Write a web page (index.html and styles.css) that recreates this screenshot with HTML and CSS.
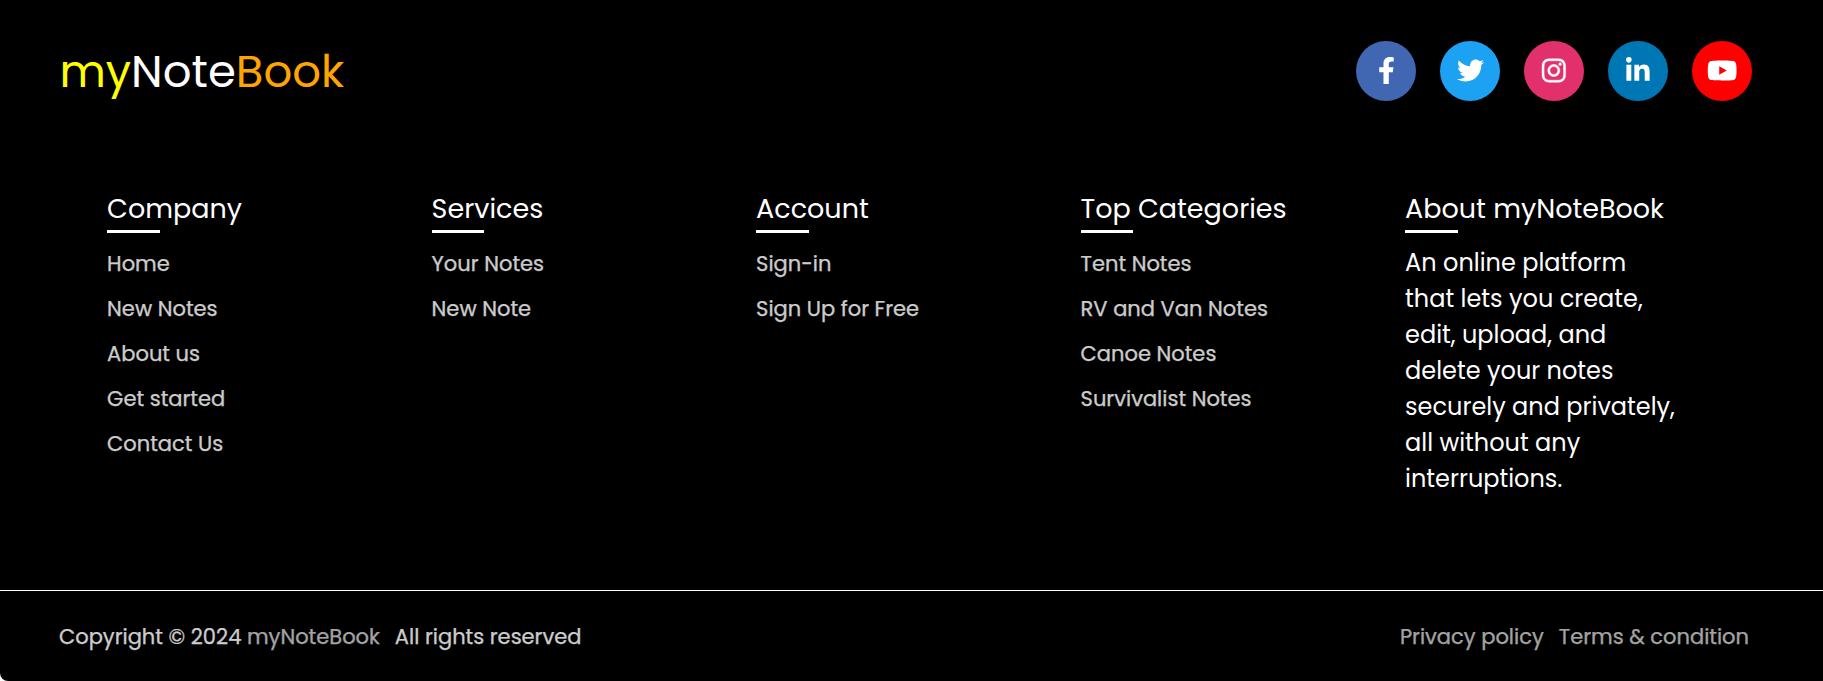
FILE: index.html
```html
<!DOCTYPE html>
<html lang="en">
<head>
<meta charset="utf-8">
<title>myNoteBook</title>
<link rel="stylesheet" href="styles.css">
</head>
<body>
<footer class="footer">
  <div class="top">
    <div class="logo"><span class="logo-my">my</span>Note<span class="logo-book">Book</span></div>
    <div class="social">
      <a class="circle facebook"><svg viewBox="0 0 320 512"><path d="M279.14 288l14.22-92.66h-88.91v-60.13c0-25.35 12.42-50.06 52.24-50.06h40.42V6.26S260.43 0 225.36 0c-73.22 0-121.08 44.38-121.08 124.72v70.62H22.89V288h81.39v224h100.17V288z"/></svg></a>
      <a class="circle twitter"><svg viewBox="0 0 512 512"><path d="M459.37 151.716c.325 4.548.325 9.097.325 13.645 0 138.72-105.583 298.558-298.558 298.558-59.452 0-114.68-17.219-161.137-47.106 8.447.974 16.568 1.299 25.34 1.299 49.055 0 94.213-16.568 130.274-44.832-46.132-.975-84.792-31.188-98.112-72.772 6.498.974 12.995 1.624 19.818 1.624 9.421 0 18.843-1.3 27.614-3.573-48.081-9.747-84.143-51.98-84.143-102.985v-1.299c13.969 7.797 30.214 12.67 47.431 13.319-28.264-18.843-46.781-51.005-46.781-87.391 0-19.492 5.197-37.36 14.294-52.954 51.655 63.675 129.3 105.258 216.365 109.807-1.624-7.797-2.599-15.918-2.599-24.04 0-57.828 46.782-104.934 104.934-104.934 30.213 0 57.502 12.67 76.67 33.137 23.715-4.548 46.456-13.32 66.599-25.34-7.798 24.366-24.366 44.833-46.132 57.827 21.117-2.273 41.584-8.122 60.426-16.243-14.292 20.791-32.161 39.308-52.628 54.253z"/></svg></a>
      <a class="circle instagram"><svg viewBox="0 0 448 512"><path d="M224.1 141c-63.6 0-114.9 51.3-114.9 114.9s51.3 114.9 114.9 114.9S339 319.5 339 255.9 287.7 141 224.1 141zm0 189.6c-41.1 0-74.7-33.5-74.7-74.7s33.5-74.7 74.7-74.7 74.7 33.5 74.7 74.7-33.6 74.7-74.7 74.7zm146.4-194.3c0 14.9-12 26.8-26.8 26.8-14.9 0-26.8-12-26.8-26.8s12-26.8 26.8-26.8 26.8 12 26.8 26.8zm76.1 27.2c-1.7-35.9-9.9-67.7-36.2-93.9-26.2-26.2-58-34.4-93.9-36.2-37-2.1-147.9-2.1-184.9 0-35.8 1.7-67.6 9.9-93.9 36.1s-34.4 58-36.2 93.9c-2.1 37-2.1 147.9 0 184.9 1.7 35.9 9.9 67.7 36.2 93.9s58 34.4 93.9 36.2c37 2.1 147.9 2.1 184.9 0 35.9-1.7 67.7-9.9 93.9-36.2 26.2-26.2 34.4-58 36.2-93.9 2.1-37 2.1-147.8 0-184.8zM398.8 388c-7.8 19.6-22.9 34.7-42.6 42.6-29.5 11.7-99.5 9-132.1 9s-102.7 2.6-132.1-9c-19.6-7.8-34.7-22.9-42.6-42.6-11.7-29.5-9-99.5-9-132.1s-2.6-102.7 9-132.1c7.8-19.6 22.9-34.7 42.6-42.6 29.5-11.7 99.5-9 132.1-9s102.7-2.6 132.1 9c19.6 7.8 34.7 22.9 42.6 42.6 11.7 29.5 9 99.5 9 132.1s2.7 102.7-9 132.1z"/></svg></a>
      <a class="circle linkedin"><svg viewBox="0 0 448 512"><path d="M100.28 448H7.4V148.9h92.88zM53.79 108.1C24.09 108.1 0 83.5 0 53.8a53.79 53.79 0 0 1 107.58 0c0 29.7-24.1 54.3-53.79 54.3zM447.9 448h-92.68V302.4c0-34.7-.7-79.2-48.29-79.2-48.29 0-55.69 37.7-55.69 76.7V448h-92.78V148.9h89.08v40.8h1.3c12.4-23.5 42.69-48.3 87.88-48.3 94 0 111.28 61.9 111.28 142.3V448z"/></svg></a>
      <a class="circle youtube"><svg viewBox="0 0 576 512"><path d="M549.655 124.083c-6.281-23.65-24.787-42.276-48.284-48.597C458.781 64 288 64 288 64S117.22 64 74.629 75.486c-23.497 6.322-42.003 24.947-48.284 48.597-11.412 42.867-11.412 132.305-11.412 132.305s0 89.438 11.412 132.305c6.281 23.65 24.787 41.5 48.284 47.821C117.22 448 288 448 288 448s170.78 0 213.371-11.486c23.497-6.321 42.003-24.171 48.284-47.821 11.412-42.867 11.412-132.305 11.412-132.305s0-89.438-11.412-132.305zm-317.51 213.508V175.185l142.739 81.205-142.739 81.201z"/></svg></a>
    </div>
  </div>
  <div class="columns">
    <div class="column">
      <h2 class="title">Company</h2>
      <ul class="links">
        <li>Home</li>
        <li>New Notes</li>
        <li>About us</li>
        <li>Get started</li>
        <li>Contact Us</li>
      </ul>
    </div>
    <div class="column">
      <h2 class="title">Services</h2>
      <ul class="links">
        <li>Your Notes</li>
        <li>New Note</li>
      </ul>
    </div>
    <div class="column">
      <h2 class="title">Account</h2>
      <ul class="links">
        <li>Sign-in</li>
        <li>Sign Up for Free</li>
      </ul>
    </div>
    <div class="column">
      <h2 class="title">Top Categories</h2>
      <ul class="links">
        <li>Tent Notes</li>
        <li>RV and Van Notes</li>
        <li>Canoe Notes</li>
        <li>Survivalist Notes</li>
      </ul>
    </div>
    <div class="column">
      <h2 class="title">About myNoteBook</h2>
      <p class="about">An online platform that lets you create, edit, upload, and delete your notes securely and privately, all without any interruptions.</p>
    </div>
  </div>
  <div class="bottom">
    <div class="copyright">Copyright © 2024 <a class="dim">myNoteBook</a><span class="rights">All rights reserved</span></div>
    <div class="policy"><a class="dim">Privacy policy</a><a class="dim">Terms &amp; condition</a></div>
  </div>
</footer>
</body>
</html>
```
FILE: styles.css
```css
* { box-sizing: border-box; margin: 0; padding: 0; }
body {
  background: #fff;
  font-family: "Poppins", "Inter", "Open Sans", sans-serif;
}
.footer {
  display: flex;
  flex-direction: column;
  height: 681px;
  background: #000;
  color: #fff;
  border-bottom-left-radius: 8px;
  overflow: hidden;
}
.top {
  display: flex;
  justify-content: space-between;
  height: 101px;
  padding: 41px 71px 0 59.4px;
}
.logo { padding-top: 1px; font-size: 45px; line-height: 60px; white-space: nowrap; }
.logo-my { color: #ff0; }
.logo-book { color: orange; }
.social { display: flex; gap: 24px; }
.circle {
  display: flex;
  justify-content: center;
  width: 60px;
  height: 60px;
  padding-top: 16px;
  border-radius: 50%;
}
.circle svg { height: 27px; fill: #fff; }
.facebook { background: #4267b2; }
.twitter { background: #1da1f2; }
.instagram { background: #e1306c; }
.instagram svg { stroke: #fff; stroke-width: 8px; overflow: visible; }
.linkedin { background: #0077b5; }
.youtube { background: #f00; }

.columns {
  display: grid;
  grid-template-columns: repeat(5, 324.5px);
  flex: 1;
  padding: 88px 0 0 107.1px;
  overflow: hidden;
}
.title { font-size: 27px; font-weight: 400; line-height: 40px; white-space: nowrap; }
.title::after {
  content: "";
  display: block;
  width: 52.5px;
  height: 3px;
  margin-top: 1px;
  background: #fff;
}
.links { margin-top: 8px; list-style: none; font-size: 21px; line-height: 45px; white-space: nowrap; }
.links li { opacity: 0.8; -webkit-text-stroke: 0.25px #fff; }
.about { width: 274px; margin-top: 12px; font-size: 24px; line-height: 36px; }

.bottom {
  display: flex;
  justify-content: space-between;
  height: 91px;
  padding: 1px 74px 0 59px;
  border-top: 1px solid #fff;
  font-size: 21px;
  line-height: 90px;
  white-space: nowrap;
}
.copyright, .policy { opacity: 0.8; -webkit-text-stroke: 0.25px; }
.dim { opacity: 0.8; }
.rights { margin-left: 15px; }
.policy { display: flex; gap: 15px; }
```
